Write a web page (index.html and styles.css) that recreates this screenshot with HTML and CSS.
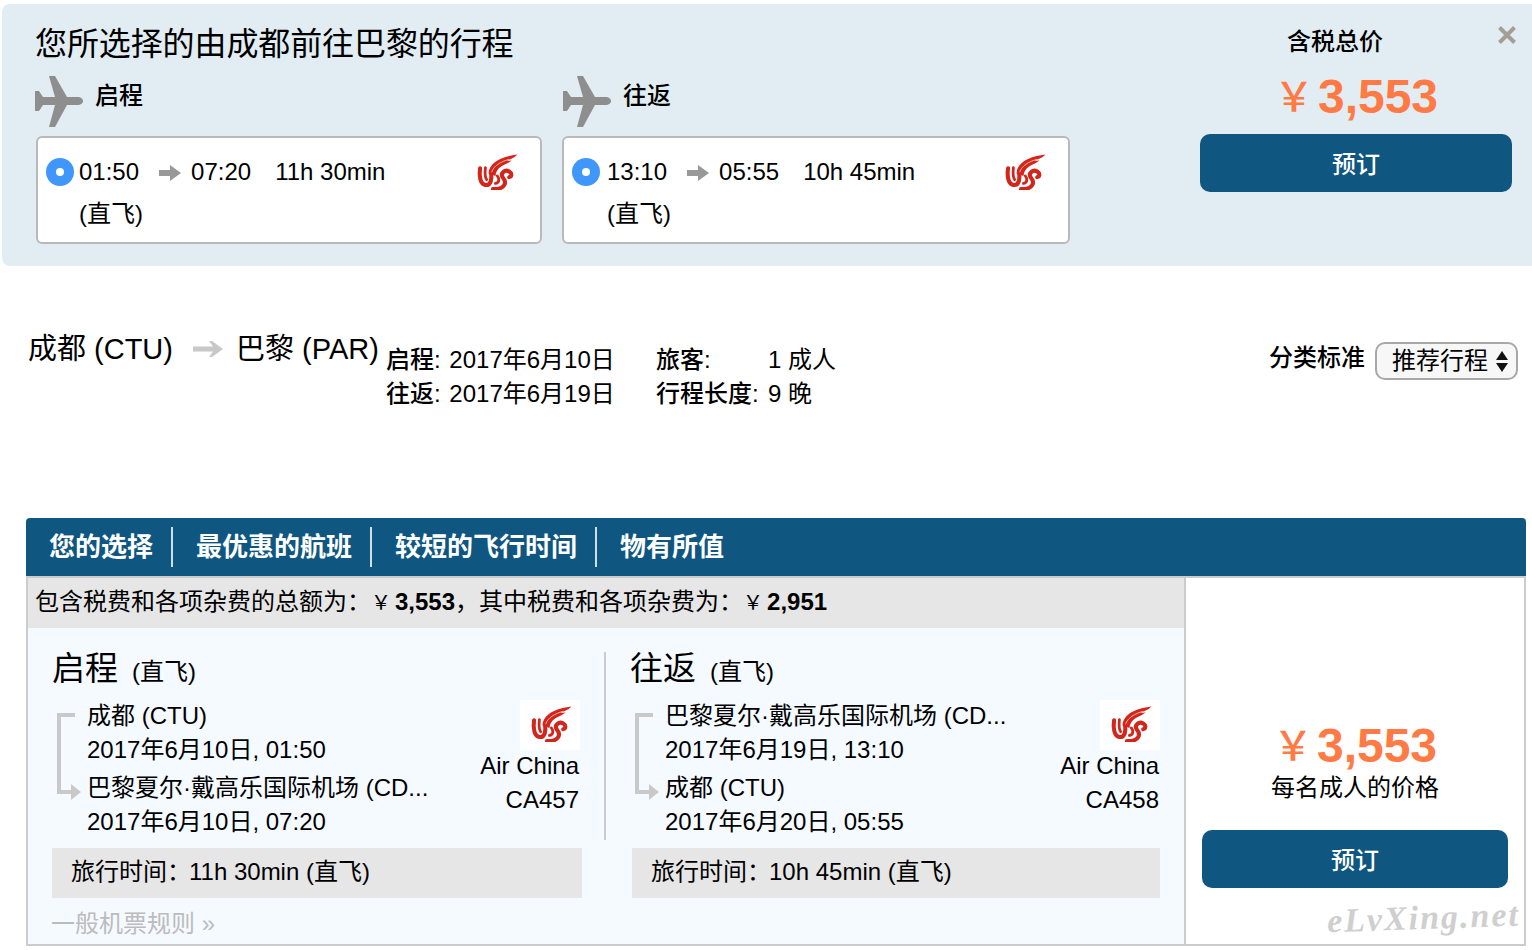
FILE: index.html
```html
<!DOCTYPE html>
<html lang="zh">
<head>
<meta charset="utf-8">
<title>行程</title>
<link rel="stylesheet" href="styles.css">
</head>
<body>
<svg class="defs" width="0" height="0" aria-hidden="true">
  <symbol id="logo" viewBox="45 35 132 118">
    <g fill="none" stroke="#d2261d" stroke-linecap="round">
      <path stroke-width="13" d="M57 84C53 110 58 134 74 137C92 139 95 118 92 98"/>
      <path stroke-width="9" d="M74 82C72 102 73 114 78 120"/>
      <path stroke-width="13" d="M98 150C130 152 146 134 130 114C120 100 136 86 150 94C160 100 158 110 150 112"/>
      <path stroke-width="9" d="M106 132C118 130 120 118 112 108"/>
    </g>
    <path fill="#d2261d" d="M84 100C86 66 124 46 176 40C166 52 150 56 140 60C148 60 154 60 158 58C148 68 130 72 122 80C114 86 108 94 106 108Z"/>
    <path fill="none" stroke="#f6b7a8" stroke-width="3" d="M94 96C100 76 124 62 150 55"/>
  </symbol>
  <symbol id="plane" viewBox="0 0 48 51">
    <path fill="#8e8e8e" d="M0 15H4L8 21H20L14 0H20L32 21H42C46 21 48 23 48 25C48 27 46 29 42 29H32L20 51H14L20 29H8L4 35H0Z"/>
  </symbol>
  <symbol id="arrow" viewBox="0 0 22 16">
    <path fill="#999" d="M0 5H11V0L22 8L11 16V11H0Z"/>
  </symbol>
  <symbol id="route-arrow" viewBox="0 0 30 16">
    <path fill="#c8c8c8" d="M0 5.5H20L16 0H19L30 8L19 16H16L20 10.5H0Z"/>
  </symbol>
  <symbol id="bracket" viewBox="0 0 26 90">
    <path fill="none" stroke="#c9c9c9" stroke-width="4" d="M19 3H3V80H16"/>
    <path fill="#c9c9c9" d="M15 72L25 80L15 88Z"/>
  </symbol>
  <symbol id="close" viewBox="0 0 18 18">
    <path fill="none" stroke="#a39f95" stroke-width="4" d="M1.5 1.5L16.5 16.5M16.5 1.5L1.5 16.5"/>
  </symbol>
</svg>

<section class="summary">
  <div class="summary-main">
    <h1 class="summary-title">您所选择的由成都前往巴黎的行程</h1>
    <div class="legs">
      <div class="leg">
        <div class="leg-head"><svg class="plane"><use href="#plane"/></svg><span class="leg-name">启程</span></div>
        <div class="leg-card">
          <span class="radio"></span>
          <div class="leg-info">
            <div class="leg-times"><span>01:50</span><svg class="time-arrow"><use href="#arrow"/></svg><span>07:20</span><span class="leg-dur">11h 30min</span></div>
            <div class="leg-stop">(直飞)</div>
          </div>
          <svg class="card-logo"><use href="#logo"/></svg>
        </div>
      </div>
      <div class="leg leg-return">
        <div class="leg-head"><svg class="plane"><use href="#plane"/></svg><span class="leg-name">往返</span></div>
        <div class="leg-card">
          <span class="radio"></span>
          <div class="leg-info">
            <div class="leg-times"><span>13:10</span><svg class="time-arrow"><use href="#arrow"/></svg><span>05:55</span><span class="leg-dur">10h 45min</span></div>
            <div class="leg-stop">(直飞)</div>
          </div>
          <svg class="card-logo"><use href="#logo"/></svg>
        </div>
      </div>
    </div>
  </div>
  <aside class="summary-price">
    <div class="price-label">含税总价</div>
    <div class="price"><span class="yen">&#xFFE5;</span>3,553</div>
    <a class="book">预订</a>
  </aside>
  <svg class="close"><use href="#close"/></svg>
</section>

<section class="route-row">
  <div class="route"><span>成都 (CTU)</span><svg class="route-arrow"><use href="#route-arrow"/></svg><span>巴黎 (PAR)</span></div>
  <div class="route-dates">
    <div><span class="key">启程:</span> 2017年6月10日</div>
    <div><span class="key">往返:</span> 2017年6月19日</div>
  </div>
  <div class="route-pax">
    <div><span class="key pax-key">旅客:</span>1 成人</div>
    <div><span class="key pax-key">行程长度:</span>9 晚</div>
  </div>
  <div class="sort">
    <span class="sort-label">分类标准</span>
    <div class="select"><span>推荐行程</span><span class="updown"><i class="up"></i><i class="down"></i></span></div>
  </div>
</section>

<nav class="tabs">
  <a class="tab">您的选择</a>
  <a class="tab">最优惠的航班</a>
  <a class="tab">较短的飞行时间</a>
  <a class="tab">物有所值</a>
</nav>

<section class="result">
  <div class="result-main">
    <div class="fare-line">包含税费和各项杂费的总额为：<span class="fare-yen">&#xFFE5;</span><b>3,553</b>，其中税费和各项杂费为：<span class="fare-yen">&#xFFE5;</span><b>2,951</b></div>
    <div class="segments">
      <article class="segment">
        <h2 class="seg-title">启程<small>(直飞)</small></h2>
        <div class="seg-body">
          <svg class="bracket"><use href="#bracket"/></svg>
          <div class="seg-stops">
            <div>成都 (CTU)</div>
            <div>2017年6月10日, 01:50</div>
            <div class="seg-dest">巴黎夏尔·戴高乐国际机场 (CD...</div>
            <div>2017年6月10日, 07:20</div>
          </div>
          <div class="carrier">
            <div class="logo-tile"><svg class="tile-logo"><use href="#logo"/></svg></div>
            <div class="carrier-name">Air China</div>
            <div>CA457</div>
          </div>
        </div>
        <div class="seg-time"><span class="time-key">旅行时间：</span>11h 30min (直飞)</div>
      </article>
      <article class="segment segment-return">
        <h2 class="seg-title">往返<small>(直飞)</small></h2>
        <div class="seg-body">
          <svg class="bracket"><use href="#bracket"/></svg>
          <div class="seg-stops">
            <div>巴黎夏尔·戴高乐国际机场 (CD...</div>
            <div>2017年6月19日, 13:10</div>
            <div class="seg-dest">成都 (CTU)</div>
            <div>2017年6月20日, 05:55</div>
          </div>
          <div class="carrier">
            <div class="logo-tile"><svg class="tile-logo"><use href="#logo"/></svg></div>
            <div class="carrier-name">Air China</div>
            <div>CA458</div>
          </div>
        </div>
        <div class="seg-time"><span class="time-key">旅行时间：</span>10h 45min (直飞)</div>
      </article>
    </div>
    <a class="rules">一般机票规则 »</a>
  </div>
  <aside class="result-price">
    <div class="price"><span class="yen">&#xFFE5;</span>3,553</div>
    <div class="per-adult">每名成人的价格</div>
    <a class="book">预订</a>
    <span class="watermark">eLvXing.net</span>
  </aside>
</section>
</body>
</html>
```

FILE: styles.css
```css
* { box-sizing: border-box; }
html, body { margin: 0; padding: 0; }
body {
  width: 1532px;
  height: 950px;
  overflow: hidden;
  background: #fff;
  color: #000;
  font-family: "Liberation Sans", "Noto Sans CJK SC", sans-serif;
  font-size: 24px;
  line-height: 34px;
}
.defs { position: absolute; }

/* Summary */
.summary {
  position: relative;
  display: flex;
  height: 262px;
  margin: 4px 0 0 2px;
  padding-left: 34px;
  background: #e2edf3;
  border-radius: 8px 0 0 8px;
}
.summary-main { width: 1164px; }
.summary-title {
  margin: 0 0 0 -1px;
  padding-top: 19px;
  font-size: 32px;
  font-weight: 400;
  letter-spacing: -0.1px;
  line-height: 42px;
}
.legs { display: flex; gap: 20px; margin-top: 11px; }
.leg { width: 506px; }
.leg-return { width: 508px; }
.leg-head { display: flex; height: 60px; margin-left: -1px; }
.leg-return .leg-head { margin-left: 1px; }
.plane { width: 48px; height: 51px; flex: none; }
.leg-name { margin: 3px 0 0 12px; font-weight: 500; }
.leg-card {
  display: flex;
  height: 108px;
  padding: 6px 22px 0 8px;
  background: #fff;
  border: 2px solid #b9b9b9;
  border-radius: 6px;
}
.radio {
  position: relative;
  flex: none;
  width: 28px;
  height: 28px;
  margin-top: 14px;
  background: #3f97fb;
  border-radius: 50%;
}
.radio::after {
  content: "";
  position: absolute;
  left: 10px;
  top: 10px;
  width: 8px;
  height: 8px;
  background: #fff;
  border-radius: 50%;
}
.leg-info { flex: 1; padding: 11px 0 0 5px; }
.leg-return .leg-info { padding-left: 7px; }
.leg-times { display: flex; align-items: center; height: 34px; }
.time-arrow { width: 22px; height: 16px; margin: 2px 10px 0 20px; }
.leg-dur { margin-left: 24px; }
.leg-stop { margin-top: 8px; }
.card-logo { width: 42px; height: 37px; margin-top: 9px; flex: none; }
.summary-price {
  display: flex;
  flex-direction: column;
  align-items: center;
  width: 312px;
  padding-top: 21px;
}
.price-label { margin-right: 42px; font-weight: 500; line-height: 34px; }
.price {
  display: flex;
  align-items: center;
  color: #ff7a45;
  font-size: 48px;
  font-weight: 700;
  line-height: 52px;
}
.summary-price .price { margin: 12px 0 0 0; }
.yen {
  margin-right: 4px;
  font-size: 40px;
  font-weight: 500;
}
.book {
  display: block;
  width: 100%;
  height: 58px;
  background: #0f5680;
  border-radius: 10px;
  color: #fff;
  font-weight: 500;
  line-height: 62px;
  text-align: center;
}
.summary-price .book { margin-top: 11px; }
.close {
  position: absolute;
  top: 22px;
  right: 16px;
  width: 18px;
  height: 18px;
}

/* Route */
.route-row {
  display: flex;
  align-items: flex-start;
  height: 252px;
  padding: 63px 14px 0 28px;
}
.route {
  display: flex;
  align-items: center;
  flex: none;
  width: 358px;
  font-size: 29px;
  line-height: 40px;
  white-space: nowrap;
}
.route-arrow { width: 30px; height: 16px; margin: 0 13px 0 20px; flex: none; }
.route-dates { width: 270px; padding-top: 14px; flex: none; }
.route-pax { padding-top: 14px; flex: 1; }
.key { font-weight: 500; margin-right: 2px; }
.pax-key { display: inline-block; min-width: 112px; margin: 0; }
.sort { display: flex; gap: 10px; margin-top: 13px; flex: none; }
.sort-label { font-weight: 500; margin-top: -1px; }
.select {
  display: flex;
  align-items: center;
  justify-content: space-between;
  width: 143px;
  height: 38px;
  padding: 0 8px 0 15px;
  background: #f7f7f7;
  border: 2px solid #a8a8a8;
  border-radius: 10px;
}
.updown { display: flex; flex-direction: column; gap: 3px; }
.up, .down { display: block; width: 0; height: 0; border: 6px solid transparent; }
.up { border-top: 0; border-bottom: 9px solid #111; }
.down { border-bottom: 0; border-top: 9px solid #111; }

/* Tabs */
.tabs {
  display: flex;
  align-items: center;
  height: 58px;
  margin: 0 6px 0 26px;
  padding-left: 23px;
  background: #0f5680;
  border-radius: 4px 4px 0 0;
  color: #fff;
  font-size: 26px;
  font-weight: 700;
}
.tab { padding-right: 18px; margin-right: 23px; border-right: 2px solid #cfdfe9; line-height: 40px; }
.tab:last-child { border-right: 0; }

/* Result */
.result {
  display: flex;
  height: 370px;
  margin: 0 6px 0 26px;
  border: 2px solid #ccc;
}
.result-main { width: 1156px; background: #f4faff; flex: none; }
.fare-line {
  height: 50px;
  padding: 7px 0 0 7px;
  background: #e6e6e6;
  white-space: nowrap;
}
.fare-line b { font-weight: 700; }
.fare-yen { margin-right: 4px; font-size: 20px; }
.segments { display: flex; padding: 24px 0 0 24px; }
.segment { width: 530px; }
.segment-return {
  position: relative;
  width: 528px;
  margin-left: 50px;
}
.segment-return::before {
  content: "";
  position: absolute;
  left: -28px;
  top: 0;
  width: 2px;
  height: 188px;
  background: #ccc;
}
.seg-title {
  margin: 0;
  font-size: 33px;
  font-weight: 400;
  line-height: 34px;
}
.seg-title small { margin-left: 14px; font-size: 24px; }
.segment-return .seg-title { margin-left: -2px; }
.seg-body { display: flex; height: 161px; padding-top: 11px; }
.bracket { width: 26px; height: 90px; margin: 12px 0 0 4px; flex: none; }
.segment-return .bracket { margin-left: 2px; }
.seg-stops { flex: 1; margin: -1px 0 0 5px; min-width: 0; }
.seg-dest { margin-top: 4px; }
.carrier { flex: none; width: 120px; padding-right: 3px; text-align: right; white-space: nowrap; }
.segment-return .carrier { padding-right: 1px; }
.carrier-name { margin-top: -1px; }
.logo-tile {
  display: flex;
  align-items: center;
  justify-content: center;
  width: 60px;
  height: 50px;
  margin: 0 -1px 0 auto;
  padding: 0 0 4px 1px;
  background: #fff;
}
.tile-logo { width: 42px; height: 37px; }
.seg-time {
  height: 50px;
  margin-top: -2px;
  padding: 7px 0 0 19px;
  background: #e6e6e6;
}
.time-key { margin-right: -2px; }
.rules {
  display: block;
  margin: 9px 0 0 23px;
  color: #bcbcbc;
}

/* Price column */
.result-price {
  position: relative;
  flex: 1;
  display: flex;
  flex-direction: column;
  align-items: center;
  padding: 142px 16px 0;
  background: #fff;
  border-left: 2px solid #ccc;
}
.per-adult { margin-top: -1px; }
.result-price .book { margin-top: 25px; }
.watermark {
  position: absolute;
  right: 4px;
  bottom: 6px;
  color: #cfcfcf;
  font-family: "Liberation Serif", serif;
  font-size: 34px;
  font-style: italic;
  font-weight: 700;
  letter-spacing: 2px;
  line-height: 40px;
  transform: rotate(-2deg);
}
```
